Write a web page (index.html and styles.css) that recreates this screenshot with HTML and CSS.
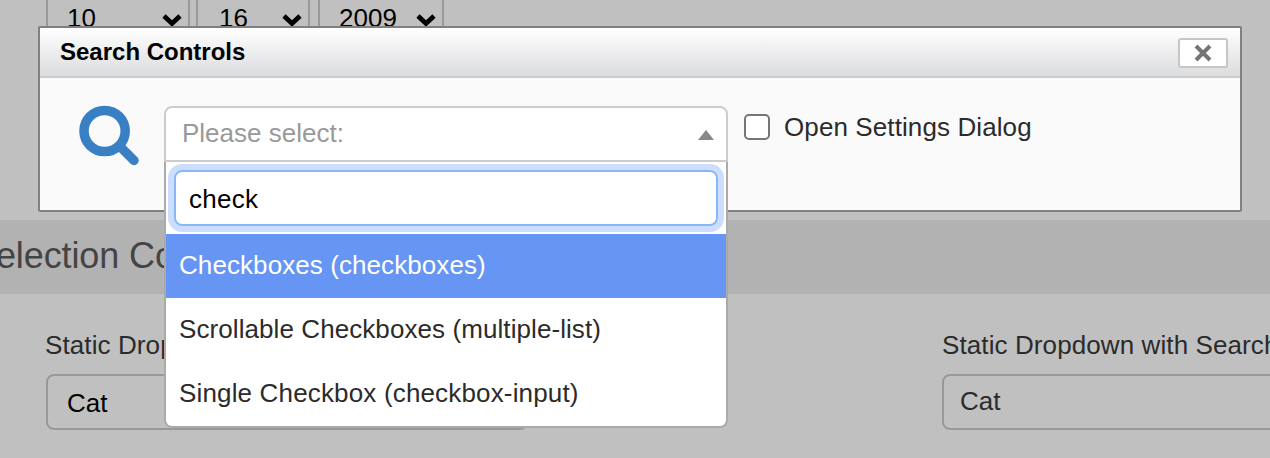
FILE: index.html
```
<!DOCTYPE html>
<html lang="en">
<head>
<meta charset="utf-8">
<title>Search Controls</title>
<link rel="stylesheet" href="styles.css">
</head>
<body>
<main class="page">
  <div class="date-row">
    <div class="date-select month"><span>10</span><svg class="chevron" viewBox="0 0 20 14"><path d="M2 3l8 7.5L18 3"/></svg></div>
    <div class="date-select day"><span>16</span><svg class="chevron" viewBox="0 0 20 14"><path d="M2 3l8 7.5L18 3"/></svg></div>
    <div class="date-select year"><span>2009</span><svg class="chevron" viewBox="0 0 20 14"><path d="M2 3l8 7.5L18 3"/></svg></div>
  </div>
  <h2 class="section-title"><span>Selection Controls</span></h2>
  <div class="fields">
    <div class="field">
      <div class="label"><span>Static Dropdown</span></div>
      <div class="select native"><span>Cat</span></div>
    </div>
    <div class="field">
      <div class="label label-search"><span>Static Dropdown with Search</span></div>
      <div class="select"><span>Cat</span></div>
    </div>
  </div>
</main>
<section class="dialog">
  <header class="dialog-head">
    <h1><span>Search Controls</span></h1>
    <button class="close" aria-label="Close"><svg viewBox="0 0 18 18"><path d="M2 2l14 14M16 2L2 16"/></svg></button>
  </header>
  <div class="dialog-body">
    <svg class="search-icon" viewBox="0 0 60 60"><circle cx="25.600" cy="25" r="20.600"/><path d="M41 40.500l14 14"/></svg>
    <div class="combo">
      <div class="combo-value"><span>Please select:</span><i class="arrow-up"></i></div>
      <div class="combo-menu">
        <div class="search-box"><span>check</span></div>
        <div class="option active"><span class="opt-a">Checkboxes (checkboxes)</span></div>
        <div class="option"><span class="opt-b">Scrollable Checkboxes (multiple-list)</span></div>
        <div class="option"><span class="opt-c">Single Checkbox (checkbox-input)</span></div>
      </div>
    </div>
    <div class="check"><i class="box"></i><span>Open Settings Dialog</span></div>
  </div>
</section>
</body>
</html>
```
FILE: styles.css
```
* { box-sizing: border-box; }
body {
  margin: 0;
  position: relative;
  width: 1270px;
  height: 458px;
  overflow: hidden;
  background: #c0c0c0;
  color: #2b2b2b;
  font: 26px/32px "Liberation Sans", Arial, sans-serif;
  white-space: nowrap;
}
h1, h2 { margin: 0; }
.page { height: 458px; overflow: hidden; }
.date-row { display: flex; height: 220px; padding-left: 46px; }
.date-select {
  display: flex;
  justify-content: space-between;
  height: 40px;
  padding: 2px 6px 0 19px;
  border: 2px solid #999;
  border-top: 0;
  color: #000;
}
.month { width: 144px; margin-right: 6px; }
.day { width: 114px; margin-right: 8px; padding-left: 21px; }
.year { width: 126px; padding-left: 19px; }
.chevron { width: 20px; height: 14px; margin-top: 11px; fill: none; stroke: #000; stroke-width: 4.8; }
.section-title {
  height: 74px;
  padding-top: 14px;
  background: #b2b2b2;
  color: #444;
  font-size: 36px;
  font-weight: 400;
  line-height: 44px;
}
.section-title span { margin-left: -28px; letter-spacing: -0.1px; }
.fields { display: flex; padding: 35px 0 0 46px; gap: 414px; }
.field { width: 482px; flex: none; }
.label { height: 45px; margin-left: -1px; letter-spacing: 0.1px; }
.label-search { margin-left: 0; }
.select {
  height: 56px;
  border: 2px solid #999;
  border-radius: 8px;
  padding: 9px 16px;
}
.select.native { padding: 11px 19px; color: #000; }
.dialog {
  position: absolute;
  left: 38px;
  top: 26px;
  width: 1204px;
  height: 186px;
  border: 2px solid #808080;
  border-radius: 2px;
  background: #fafafa;
}
.dialog-head {
  display: flex;
  justify-content: space-between;
  height: 50px;
  padding: 10px 12px 0 20px;
  border-bottom: 2px solid #ccc;
  background: linear-gradient(#fff, #dbdcde);
  color: #000;
}
h1 { font-size: 24px; line-height: 28px; }
.close {
  display: grid;
  place-items: center;
  width: 50px;
  height: 30px;
  padding: 0;
  border: 2px solid #c6c6c6;
  border-radius: 3px;
  background: #fff;
}
.close svg { width: 18px; height: 18px; fill: none; stroke: #757575; stroke-width: 4; }
.dialog-body { display: flex; padding: 28px 0 0 39px; }
.search-icon { width: 60px; height: 60px; margin-right: 25px; overflow: visible; fill: none; stroke: #3880c3; stroke-width: 9.5; stroke-linecap: round; }
.combo { position: relative; width: 564px; height: 56px; }
.combo-value {
  display: flex;
  justify-content: space-between;
  height: 56px;
  padding: 9px 12px 0 16px;
  border: 2px solid #ccc;
  border-radius: 8px 8px 0 0;
  background: #fff;
  color: #999;
}
.arrow-up { margin-top: 13px; width: 0; height: 10px; border: 8px solid transparent; border-top: 0; border-bottom: 10px solid #888; }
.combo-menu {
  position: absolute;
  top: 56px;
  left: 0;
  width: 564px;
  height: 266px;
  padding-top: 8px;
  border: 2px solid #aaa;
  border-top: 0;
  border-radius: 0 0 8px 8px;
  background: #fff;
}
.search-box {
  height: 56px;
  margin: 0 8px 8px;
  padding: 11px 13px;
  border: 2px solid #88b7f9;
  border-radius: 8px;
  box-shadow: 0 0 0 6px #cdddfd;
  color: #000;
  letter-spacing: 0.3px;
}
.option { height: 64px; padding: 15px 13px; }
.option.active { background: #6795f4; color: #fff; }
.opt-a, .opt-b { letter-spacing: 0.08px; }
.opt-c { letter-spacing: 0.16px; }
.check { display: flex; gap: 14px; padding: 5px 0 0 16px; letter-spacing: 0.1px; }
.box { width: 26px; height: 26px; margin-top: 3px; border: 2px solid #767676; border-radius: 5px; background: #fff; }
```
